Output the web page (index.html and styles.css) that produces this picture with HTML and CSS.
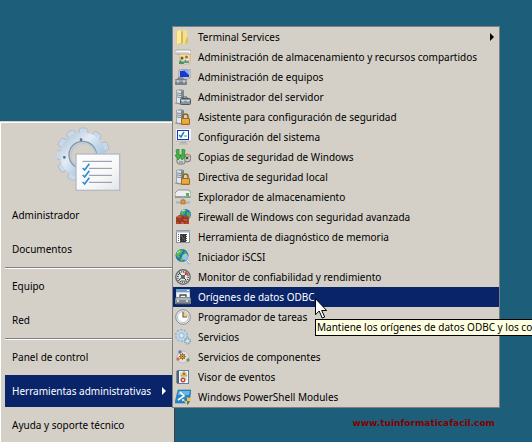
FILE: index.html
```html
<!DOCTYPE html>
<html lang="es">
<head>
<meta charset="utf-8">
<title>Herramientas administrativas</title>
<link rel="stylesheet" href="styles.css">
</head>
<body>
<main class="desktop">
  <nav class="start" aria-label="Inicio">
    <svg class="emblem" viewBox="0 0 192 198" aria-hidden="true">
      <defs>
        <linearGradient id="steel" x1="0" y1="0" x2="1" y2="1"><stop offset="0" stop-color="#b4c8dc"/><stop offset=".35" stop-color="#e2ecf5"/><stop offset=".6" stop-color="#bfd4e8"/><stop offset="1" stop-color="#9dbbd9"/></linearGradient>
        <linearGradient id="paper" x1="0" y1="0" x2="1" y2="1"><stop offset="0" stop-color="#fff"/><stop offset=".6" stop-color="#f8f8f8"/><stop offset="1" stop-color="#e2e4e8"/></linearGradient>
        <path id="tooth" d="M62 28 65 10Q66 6 71 6H83Q88 6 89 10L92 28Z"/>
      </defs>
      <g fill="#c9d9e9" stroke="#9fb2c6" stroke-width="2">
        <use href="#tooth" transform="rotate(2 77 87)"/><use href="#tooth" transform="rotate(36 77 87)"/><use href="#tooth" transform="rotate(69 77 87)"/><use href="#tooth" transform="rotate(206 77 87)"/><use href="#tooth" transform="rotate(238 77 87)"/><use href="#tooth" transform="rotate(270 77 87)"/><use href="#tooth" transform="rotate(301 77 87)"/><use href="#tooth" transform="rotate(331 77 87)"/>
      </g>
      <circle cx="77" cy="87" r="54" fill="none" stroke="url(#steel)" stroke-width="28"/>
      <circle cx="77" cy="87" r="41" fill="none" stroke="#8496aa" stroke-width="4"/>
      <circle cx="79" cy="89" r="37" fill="none" stroke="#b5c9dc" stroke-width="4"/>
      <g fill="#5c6c7c"><circle cx="72" cy="41" r="4"/><circle cx="22" cy="94" r="4"/></g>
      <rect x="57" y="84" width="131" height="109" fill="url(#paper)" stroke="#b3bbc6" stroke-width="4"/>
      <path d="M76 106h89M96 127h69M96 148h69M96 169h69" stroke="#8c90a4" stroke-width="3"/>
      <path d="M77 126l6 6 14-19M77 147l6 6 14-19M77 168l6 6 14-19" fill="none" stroke="#2f8fce" stroke-width="5"/>
    </svg>
    <ul class="places">
      <li><button class="place">Administrador</button></li>
      <li><button class="place">Documentos</button></li>
    </ul>
    <hr class="rule">
    <ul class="places">
      <li><button class="place">Equipo</button></li>
      <li><button class="place">Red</button></li>
    </ul>
    <hr class="rule">
    <ul class="places">
      <li><button class="place">Panel de control</button></li>
      <li><button class="place open" aria-haspopup="menu" aria-expanded="true">Herramientas administrativas<svg class="arrow" viewBox="0 0 4 8" aria-hidden="true"><path d="M0 0v8l4-4z"/></svg></button></li>
      <li><button class="place">Ayuda y soporte técnico</button></li>
    </ul>

    <ul class="tools">
      <li><button class="tool" aria-haspopup="menu"><svg class="icon" viewBox="0 0 16 16" aria-hidden="true"><path d="M1 2l4-1 3 1v13l-4 1-3-1z" fill="#e9cf6c"/><path d="M2 2l3-1 1 1v12l-4 1z" fill="#fbeba5"/><path d="M7 2l4-1 1 1v12l-5 1z" fill="#f5e08a"/><path d="M6 3l2-1v12l-2 1z" fill="#d8b650"/><path d="M11 9l2-1v6l-3 1z" fill="#dfc05f"/></svg>Terminal Services<svg class="arrow" viewBox="0 0 4 8" aria-hidden="true"><path d="M0 0v8l4-4z"/></svg></button></li>
      <li><button class="tool"><svg class="icon" viewBox="0 0 16 16" aria-hidden="true"><path d="M4 4h11v11H5z" fill="#f5dda4" stroke="#c9a35d" stroke-width=".5"/><path d="M0 2l2-1h13l1 1v3H1L0 4z" fill="#f6f6f3" stroke="#96968f" stroke-width=".7"/><path d="M1 4h13" stroke="#b7b7b4"/><circle cx="7" cy="9" r="1.500" fill="#7a552c"/><circle cx="11.500" cy="8" r="1.500" fill="#a8702e"/><path d="M4 15c0-6 5-6 5 0z" fill="#3f9958"/><path d="M9 14c0-5 5-5 5 0z" fill="#5890b0"/><path d="M6 11l1 2 1-2M11 10l1 3 1-3" fill="#fff"/></svg>Administración de almacenamiento y recursos compartidos</button></li>
      <li><button class="tool"><svg class="icon" viewBox="0 0 16 16" aria-hidden="true"><path d="M4 1l11-1v9H4z" fill="#e4e4df" stroke="#777" stroke-width=".6"/><path d="M5 2l9-1v7H5z" fill="#1539d1"/><path d="M9 1.500l5-.5v5z" fill="#86b4ff"/><path d="M8 9h4l2 2H7z" fill="#c2c2be"/><path d="M3 11V9h5v2" fill="none" stroke="#667"/><rect y="10" width="12" height="6" rx="1" fill="#76818b"/><path d="M0 12h12" stroke="#b7c1ca"/><path d="M3 11v3M9 11v3" stroke="#e8e8e8"/></svg>Administración de equipos</button></li>
      <li><button class="tool"><svg class="icon" viewBox="0 0 16 16" aria-hidden="true"><use href="#server"/><path d="M8 10V8h4v2" fill="none" stroke="#555f69"/><rect x="5.500" y="9.500" width="10" height="6" rx="1" fill="#87939e" stroke="#505a65"/><path d="M6 11.500h9" stroke="#bdc7cf"/><path d="M8 11v2M13 11v2" stroke="#e9eef2"/></svg>Administrador del servidor</button></li>
      <li><button class="tool"><svg class="icon" viewBox="0 0 16 16" aria-hidden="true"><defs><g id="server"><path d="M1 1l5-1 3 1v13l-4 1-4-1z" fill="#9ba5ad"/><path d="M2 1.500l4 .5v12l-4-.5z" fill="#e2e7e9"/><path d="M2 4l4 .5M2 6l4 .5M2 8l4 .5" stroke="#7b868f"/><path d="M6 2l3-1v13l-3 1z" fill="#7b8790"/><path d="M0 14l5 1h4" stroke="#8b9298" fill="none"/></g><g id="padlock"><path d="M8 9V7.500c0-3.300 5-3.300 5 0V9" fill="none" stroke="#8b681f" stroke-width="1.500"/><rect x="6.500" y="9.500" width="8" height="6" rx=".5" fill="#dc982c" stroke="#a36919"/><path d="M7 11h7M7 13h7" stroke="#f1bd5c"/></g></defs><use href="#server"/><use href="#padlock"/></svg>Asistente para configuración de seguridad</button></li>
      <li><button class="tool"><svg class="icon" viewBox="0 0 16 16" aria-hidden="true"><rect x="1" width="15" height="12" fill="#f5f5ef"/><rect x="2.500" y="1.500" width="11" height="9" fill="#fff" stroke="#1733d4"/><path d="M4 6l2 2 3-5" fill="none" stroke="#2684a7" stroke-width="1.500"/><path d="M9 7h3" stroke="#34a3bb"/><path d="M1 12h15M6 13h5v1H6zM4 15h9" stroke="#b5b4af" fill="#999"/></svg>Configuración del sistema</button></li>
      <li><button class="tool"><svg class="icon" viewBox="0 0 16 16" aria-hidden="true"><circle cx="12" cy="9" r="4" fill="#c6c6c2" stroke="#777"/><path d="M10 7l4-2 1 3z" fill="#dfa17e"/><circle cx="12" cy="9" r="1.300" fill="#454545"/><rect x="2" y="9" width="8" height="6" rx="2" fill="#cfd2d0" stroke="#737773"/><path d="M1 1l3-1v6h2l-3 5-3-5h2zM7 0l3 1-1 6h2l-4 4-2-5h2z" fill="#40ba3f" stroke="#21822b" stroke-width=".7"/><path d="M4 13h4" stroke="#737773"/></svg>Copias de seguridad de Windows</button></li>
      <li><button class="tool"><svg class="icon" viewBox="0 0 16 16" aria-hidden="true"><use href="#server"/><use href="#padlock"/></svg>Directiva de seguridad local</button></li>
      <li><button class="tool"><svg class="icon" viewBox="0 0 16 16" aria-hidden="true"><path d="M1 3l2-2h11l2 3v4H0V4z" fill="#ecefed" stroke="#858783" stroke-width=".8"/><path d="M0 8h15" stroke="#777"/><rect x="11" y="4" width="3" height="3" fill="#4eb74c"/><path d="M8 8v5M1 13.500h14" stroke="#a4b2bc" stroke-width="2"/><rect x="6" y="11" width="4" height="4" fill="#d99938" stroke="#976620" stroke-width=".6"/></svg>Explorador de almacenamiento</button></li>
      <li><button class="tool"><svg class="icon" viewBox="0 0 16 16" aria-hidden="true"><circle cx="10.500" cy="5.500" r="5.500" fill="#237cc1"/><path d="M7 2c2-2 3-2 4-1l-1 3-2 2-3-1zM12 3l3 1v5l-3-2z" fill="#58b345"/><path d="M7 2l3-1" stroke="#ccecff"/><path d="M1 8l3-2 9 1 1 2v6H1z" fill="#b54429"/><path d="M1 9h12M1 12h12M4 7v2M8 7v2M3 9v3M7 9v3M11 9v3M5 12v3M9 12v3" stroke="#723228" stroke-width=".8"/><path d="M2 8h4M9 11h3M6 14h3" stroke="#dc785b"/></svg>Firewall de Windows con seguridad avanzada</button></li>
      <li><button class="tool"><svg class="icon" viewBox="0 0 16 16" aria-hidden="true"><rect x="1.500" y="1.500" width="13" height="12" fill="#fff" stroke="#868e98"/><path d="M1 2.500h14" stroke="#a7b2c2" stroke-width="2"/><rect x="5" y="5" width="6" height="8" fill="#333"/><path d="M3 5.500h10M3 7.500h10M3 9.500h10M3 11.500h10" stroke="#555" stroke-dasharray="1 1"/><path d="M6 6l4 6" stroke="#606060"/></svg>Herramienta de diagnóstico de memoria</button></li>
      <li><button class="tool"><svg class="icon" viewBox="0 0 16 16" aria-hidden="true"><circle cx="7" cy="6.500" r="6.500" fill="#2872bd"/><path d="M2 3c3-4 5-3 6-1L6 5 4 6l1 2-2 1-2-3zM10 2l3 3-2 3-2-3zM6 8l3 2-2 3-2-2z" fill="#51bd43"/><path d="M2 4l3-2" stroke="#c3f3e7"/><circle cx="10" cy="8" r="3" fill="#cde2f3" opacity=".7"/><path d="M11 10l4 5" stroke="#93bcd9" stroke-width="2.500"/><path d="M12 11l3 3" stroke="#fff"/></svg>Iniciador iSCSI</button></li>
      <li><button class="tool"><svg class="icon" viewBox="0 0 16 16" aria-hidden="true"><circle cx="8" cy="8" r="7.200" fill="#e6e7e4" stroke="#686a69" stroke-width="1.400"/><circle cx="8" cy="8" r="5.200" fill="none" stroke="#3e4143" stroke-width="1.500" stroke-dasharray="1 1"/><path d="M10 3l3 3" stroke="#df4535" stroke-width="2"/><path d="M4 4l7 7M4 11l7-6" stroke="#3e4548"/><circle cx="8" cy="8" r="2" fill="#5c6264"/><path d="M6 12h5" stroke="#666"/></svg>Monitor de confiabilidad y rendimiento</button></li>
      <li><button class="tool chosen"><svg class="icon" viewBox="0 0 16 16" aria-hidden="true"><rect x="1" width="14" height="13" fill="#c7d5df"/><path d="M1 1.500h14" stroke="#6d9cc4" stroke-width="3"/><path d="M12 1.500h2" stroke="#fff"/><path d="M2 4h12v4H2z" fill="#f5f7f6"/><path d="M5 8V6h6v2" fill="none" stroke="#454b50" stroke-width="1.300"/><path d="M1 8h14l1 2v5H0v-5z" fill="#7f8a92"/><path d="M1 10h14" stroke="#d9dfe2"/><path d="M3 11v2M12 11v2" stroke="#edf1f3" stroke-width="1.500"/><path d="M1 15h14" stroke="#454e55"/></svg>Orígenes de datos ODBC</button></li>
      <li><button class="tool"><svg class="icon" viewBox="0 0 16 16" aria-hidden="true"><circle cx="8" cy="8" r="7.300" fill="#eef1f2" stroke="#858b8f"/><circle cx="8" cy="8" r="5.500" fill="#fcfcfa" stroke="#b5bec6"/><path d="M8 8V3a5 5 0 0 1 5 5z" fill="#f1cf78"/><path d="M8 3v5h4" fill="none" stroke="#596574" stroke-width="1.200"/></svg>Programador de tareas</button></li>
      <li><button class="tool"><svg class="icon" viewBox="0 0 16 16" aria-hidden="true"><circle cx="6.500" cy="6.500" r="5.500" fill="none" stroke="#8aaec9" stroke-width="2" stroke-dasharray="2 1.450"/><circle cx="6.500" cy="6.500" r="4" fill="none" stroke="#b9d8ec" stroke-width="2.500"/><circle cx="6.500" cy="6.500" r="2.500" fill="#e2e5e4" stroke="#779db9" stroke-width=".6"/><circle cx="12.500" cy="12" r="3" fill="none" stroke="#7c9fb8" stroke-width="1.300" stroke-dasharray="1.200 1.150"/><circle cx="12.500" cy="12" r="2" fill="#dbecf5" stroke="#96bdd5"/></svg>Servicios</button></li>
      <li><button class="tool"><svg class="icon" viewBox="0 0 16 16" aria-hidden="true"><circle cx="8" cy="8" r="6" fill="#dedfdb" stroke="#b0b1ad" stroke-width=".7"/><circle cx="5" cy="3" r="1.700" fill="#6675ba"/><circle cx="3" cy="10" r="1.700" fill="#c9705f"/><circle cx="13" cy="11" r="1.700" fill="#5f9d68"/><path d="M7.500 4v7M4 7.500h7M5 5l5 5M10 5l-5 5" stroke="#ad7221"/><circle cx="7.500" cy="7.500" r="2" fill="#e6ae3c" stroke="#99651f"/><circle cx="7.500" cy="7.500" r=".7" fill="#6c491c"/></svg>Servicios de componentes</button></li>
      <li><button class="tool"><svg class="icon" viewBox="0 0 16 16" aria-hidden="true"><rect x="2" y="1" width="12" height="14" fill="#597f9f"/><rect x="4" y="2" width="9" height="12" fill="#f7f9fa"/><path d="M5 4h7M5 6h7M5 8h7M5 10h7" stroke="#9fb5c8" stroke-width=".7"/><path d="M1 3h3M1 5h3M1 7h3M1 9h3M1 11h3M1 13h3" stroke="#3d4c58"/><path d="M9 2l3 5H6z" fill="#f4c84a" stroke="#b68a29" stroke-width=".6"/><path d="M9 4v2" stroke="#333"/><circle cx="8" cy="11" r="2.500" fill="#d64231"/><path d="M7 10l2 2M9 10l-2 2" stroke="#fff" stroke-width=".8"/></svg>Visor de eventos</button></li>
      <li><button class="tool"><svg class="icon" viewBox="0 0 16 16" aria-hidden="true"><path d="M3 1h13l-2 13H0z" fill="#2786c6" stroke="#1e69a7" stroke-width=".6"/><path d="M4 2h11l-1 4H3z" fill="#65b9e5"/><path d="M5 3l4 4-6 4M7 11h3" fill="none" stroke="#fff" stroke-width="1.600"/><path d="M9 9q2 0 3-1 1 1 4 1 0 5-4 7-3-2-3-7z" fill="#f4c641"/><path d="M9 9q2 0 3-1v4H10q-1-1-1-3zM12 12h3q-1 3-3 4z" fill="#357cc1"/></svg>Windows PowerShell Modules</button></li>
    </ul>
    <div class="tip" role="tooltip">Mantiene los orígenes de datos ODBC y los co</div>
    <svg class="pointer" viewBox="0 0 12 21" aria-hidden="true"><path d="M.5.7v16l3.700-3.700 3 7 2.500-1-3-6.500h5z" fill="#fff" stroke="#000"/></svg>
  </nav>
  <p class="site">www.tuinformaticafacil.com</p>
</main>
</body>
</html>
```
FILE: styles.css
```css
* { box-sizing: border-box; }

body {
  margin: 0;
  background: #1d5f7b;
  color: #000;
  font: 10px/14px "Noto Sans", sans-serif;
}

ul { list-style: none; margin: 0; padding: 0; }

button {
  border: 0;
  background: none;
  color: inherit;
  font: inherit;
  text-align: left;
  white-space: nowrap;
}

.desktop {
  position: relative;
  display: flex;
  align-items: flex-end;
  justify-content: space-between;
  min-height: 100vh;
  overflow: hidden;
}

.start {
  position: relative;
  width: 175px;
  padding: 4px 0 0 5px;
  background: #d4d0c8;
  border-right: 1px solid #404040;
  box-shadow: inset 1px 1px #fff, 0 -1px #d4d0c8;
}

.emblem {
  display: block;
  width: 64px;
  height: 66px;
  margin: 0 0 6px 52px;
}

.places li { padding: 1px 0; }

.place {
  display: flex;
  align-items: center;
  justify-content: space-between;
  width: 167px;
  height: 32px;
  padding: 0 6px 0 7px;
}

.open, .chosen { background: #0a246a; color: #fff; }

.rule {
  height: 2px;
  margin: 1px 0 0;
  border: 0;
  border-top: 1px solid #808080;
  border-bottom: 1px solid #fff;
}

.arrow { width: 4px; height: 8px; fill: currentColor; }

.tools {
  position: absolute;
  left: 172px;
  bottom: 34px;
  width: 328px;
  background: #d4d0c8;
  border: 1px solid #808080;
}

.tool {
  display: flex;
  align-items: center;
  width: 100%;
  height: 20px;
  padding: 0 5px 0 2px;
}

.icon { flex: none; width: 16px; height: 16px; margin-right: 7px; }

.tool .arrow { margin-left: auto; }

.tip {
  position: absolute;
  left: 315px;
  bottom: 106px;
  padding: 0 1px;
  background: #ffffe1;
  border: 1px solid #000;
  border-right: 0;
  line-height: 15px;
  white-space: nowrap;
}

.pointer {
  position: absolute;
  left: 315px;
  bottom: 123px;
  width: 12px;
  height: 21px;
}

.site {
  margin: 0 37px 12px 0;
  color: #800000;
  font: bold 9px/14px Verdana, "DejaVu Sans", sans-serif;
}
```
